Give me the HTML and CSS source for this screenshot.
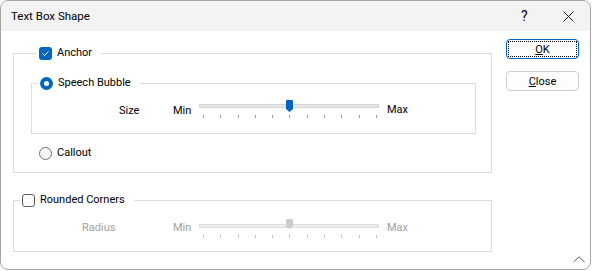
FILE: index.html
```html
<!DOCTYPE html>
<html lang="en">
<head>
  <meta charset="UTF-8">
  <title>Text Box Shape</title>
  <link rel="stylesheet" href="styles.css">
</head>
<body>
  <div class="window">
    <div class="titlebar">
      <span class="title">Text Box Shape</span>
      <span class="help">?</span>
      <span class="close-x">
        <svg width="11" height="11" viewBox="0 0 11 11"><path d="M0.5 0.5 L10.5 10.5 M10.5 0.5 L0.5 10.5" stroke="#1a1a1a" stroke-width="1" fill="none"/></svg>
      </span>
    </div>
    <div class="main">
      <div class="groups">
        <fieldset class="group anchor">
          <legend>
            <span class="check on"><svg width="13" height="13" viewBox="0 0 13 13"><path d="M3.5 6.5 L5.5 8.5 L9.5 4.5" stroke="#fff" stroke-width="1" fill="none"/></svg></span>
            Anchor
          </legend>
          <fieldset class="group speech">
            <legend><span class="radio on"></span>Speech Bubble</legend>
            <div class="slider-row size-row">
              <span class="label">Size</span>
              <span class="minmax">Min</span>
              <div class="slider">
                <div class="track"></div>
                <span class="thumb"></span>
                <div class="ticks"><i></i><i></i><i></i><i></i><i></i><i></i><i></i><i></i><i></i><i></i><i></i></div>
              </div>
              <span class="minmax max">Max</span>
            </div>
          </fieldset>
          <div class="option"><span class="radio"></span>Callout</div>
        </fieldset>
        <fieldset class="group rounded">
          <legend><span class="check"></span>Rounded Corners</legend>
          <div class="slider-row radius-row disabled">
            <span class="label">Radius</span>
            <span class="minmax">Min</span>
            <div class="slider">
              <div class="track"></div>
              <span class="thumb"></span>
              <div class="ticks"><i></i><i></i><i></i><i></i><i></i><i></i><i></i><i></i><i></i><i></i><i></i></div>
            </div>
            <span class="minmax max">Max</span>
          </div>
        </fieldset>
      </div>
      <div class="buttons">
        <button class="btn default"><span class="focus"><u>O</u>K</span></button>
        <button class="btn"><u>C</u>lose</button>
      </div>
    </div>
    <svg class="grip" width="12" height="7" viewBox="0 0 12 7"><path d="M0.5 6 L6 0.8 L11.5 6" stroke="#5a5a5a" stroke-width="1" fill="none"/></svg>
  </div>
</body>
</html>
```

FILE: styles.css
```css
body{
  margin:0;
  background:#fff;
  font-family: "Segoe UI", Roboto, "Liberation Sans", sans-serif;
  font-size:11px;
  color:#000;
}
.window{
  position:relative;
  box-sizing:border-box;
  width:591px;
  height:270px;
  border:1px solid #a3a3a3;
  border-radius:8px;
  overflow:hidden;
  background:#fff;
}
.titlebar{
  display:flex;
  align-items:center;
  height:30px;
  background:#f3f3f3;
  padding-left:10px;
  font-size:11.5px;
}
.title{
  flex:1;
}
.help{
  font-size:14px;
  width:10px;
  margin-right:32px;
}
.close-x{
  display:flex;
  margin-right:16px;
}
.main{
  display:flex;
  padding:8px 10px 0 12px;
}
.groups{
  width:479px;
  margin-top:7px;
}
.group{
  margin:0;
  border:1px solid #dcdcdc;
  min-width:0;
}
.group legend{
  display:flex;
  align-items:center;
  height:14px;
  line-height:14px;
  margin-left:6px;
  padding:0 9px 0 2px;
}
.anchor{
  padding:16px 15px 12px 17px;
}
.speech{
  padding:8px 0 13px 0;
}
.rounded{
  margin-top:20px;
  padding:11px 0 11px 0;
}
.check{
  box-sizing:border-box;
  display:inline-flex;
  width:13px;
  height:13px;
  border:1px solid #5d5d5d;
  border-radius:3px;
  background:#fbfbfb;
  margin-right:5px;
}
.check.on{
  border:none;
  background:#0067c0;
}
.radio{
  box-sizing:border-box;
  display:inline-flex;
  align-items:center;
  justify-content:center;
  width:13px;
  height:13px;
  border:1px solid #737373;
  border-radius:50%;
  background:#f6f6f6;
  margin-right:5px;
}
.radio.on{
  border:none;
  background:#0067c0;
}
.radio.on:after{
  content:'';
  width:5px;
  height:5px;
  border-radius:50%;
  background:#fff;
}
.option{
  display:flex;
  align-items:center;
  height:14px;
  line-height:14px;
  margin:12px 0 0 8px;
}
.slider-row{
  display:flex;
  align-items:flex-start;
  height:22px;
}
.slider-row .label,
.slider-row .minmax{
  line-height:14px;
  margin-top:3px;
}
.size-row .label,
.size-row .minmax{
  margin-top:6px;
}
.size-row .minmax.max{
  margin-top:5px;
}
.size-row .label{
  margin-left:87px;
  width:54px;
}
.radius-row .label{
  margin-left:68px;
  width:91px;
}
.minmax{
  width:26px;
}
.minmax.max{
  margin-left:8px;
}
.slider{
  position:relative;
  width:180px;
  height:22px;
}
.track{
  box-sizing:border-box;
  margin-top:6px;
  height:4px;
  background:#e6e6e6;
  border:1px solid #d4d4d4;
}
.thumb{
  position:absolute;
  left:87px;
  top:2px;
  width:7px;
  height:12px;
  background:#0067c0;
  border-radius:1px 1px 0 0;
  clip-path:polygon(0 0,100% 0,100% 75%,50% 100%,0 75%);
}
.ticks{
  display:flex;
  justify-content:space-between;
  margin:7px 2px 0 4px;
}
.ticks i{
  width:1px;
  height:3px;
  background:#9a9a9a;
}
.disabled{
  color:#a0a0a0;
}
.disabled .track{
  background:#ececec;
  border-color:#dedede;
}
.disabled .thumb{
  top:1px;
  height:10px;
  background:#cccccc;
}
.disabled .ticks i{
  background:#c4c4c4;
}
.buttons{
  display:flex;
  flex-direction:column;
  gap:12px;
  margin-left:14px;
}
.btn{
  box-sizing:border-box;
  width:73px;
  height:20px;
  padding:0;
  font:inherit;
  color:#000;
  background:#fdfdfd;
  border:1px solid #d0d0d0;
  border-radius:4px;
}
.btn.default{
  display:flex;
  padding:1px;
  border-color:#0067c0;
}
.btn .focus{
  flex:1;
  display:flex;
  align-items:center;
  justify-content:center;
  border:1px dotted #000;
}
.grip{
  position:absolute;
  right:5px;
  bottom:6px;
}
```
